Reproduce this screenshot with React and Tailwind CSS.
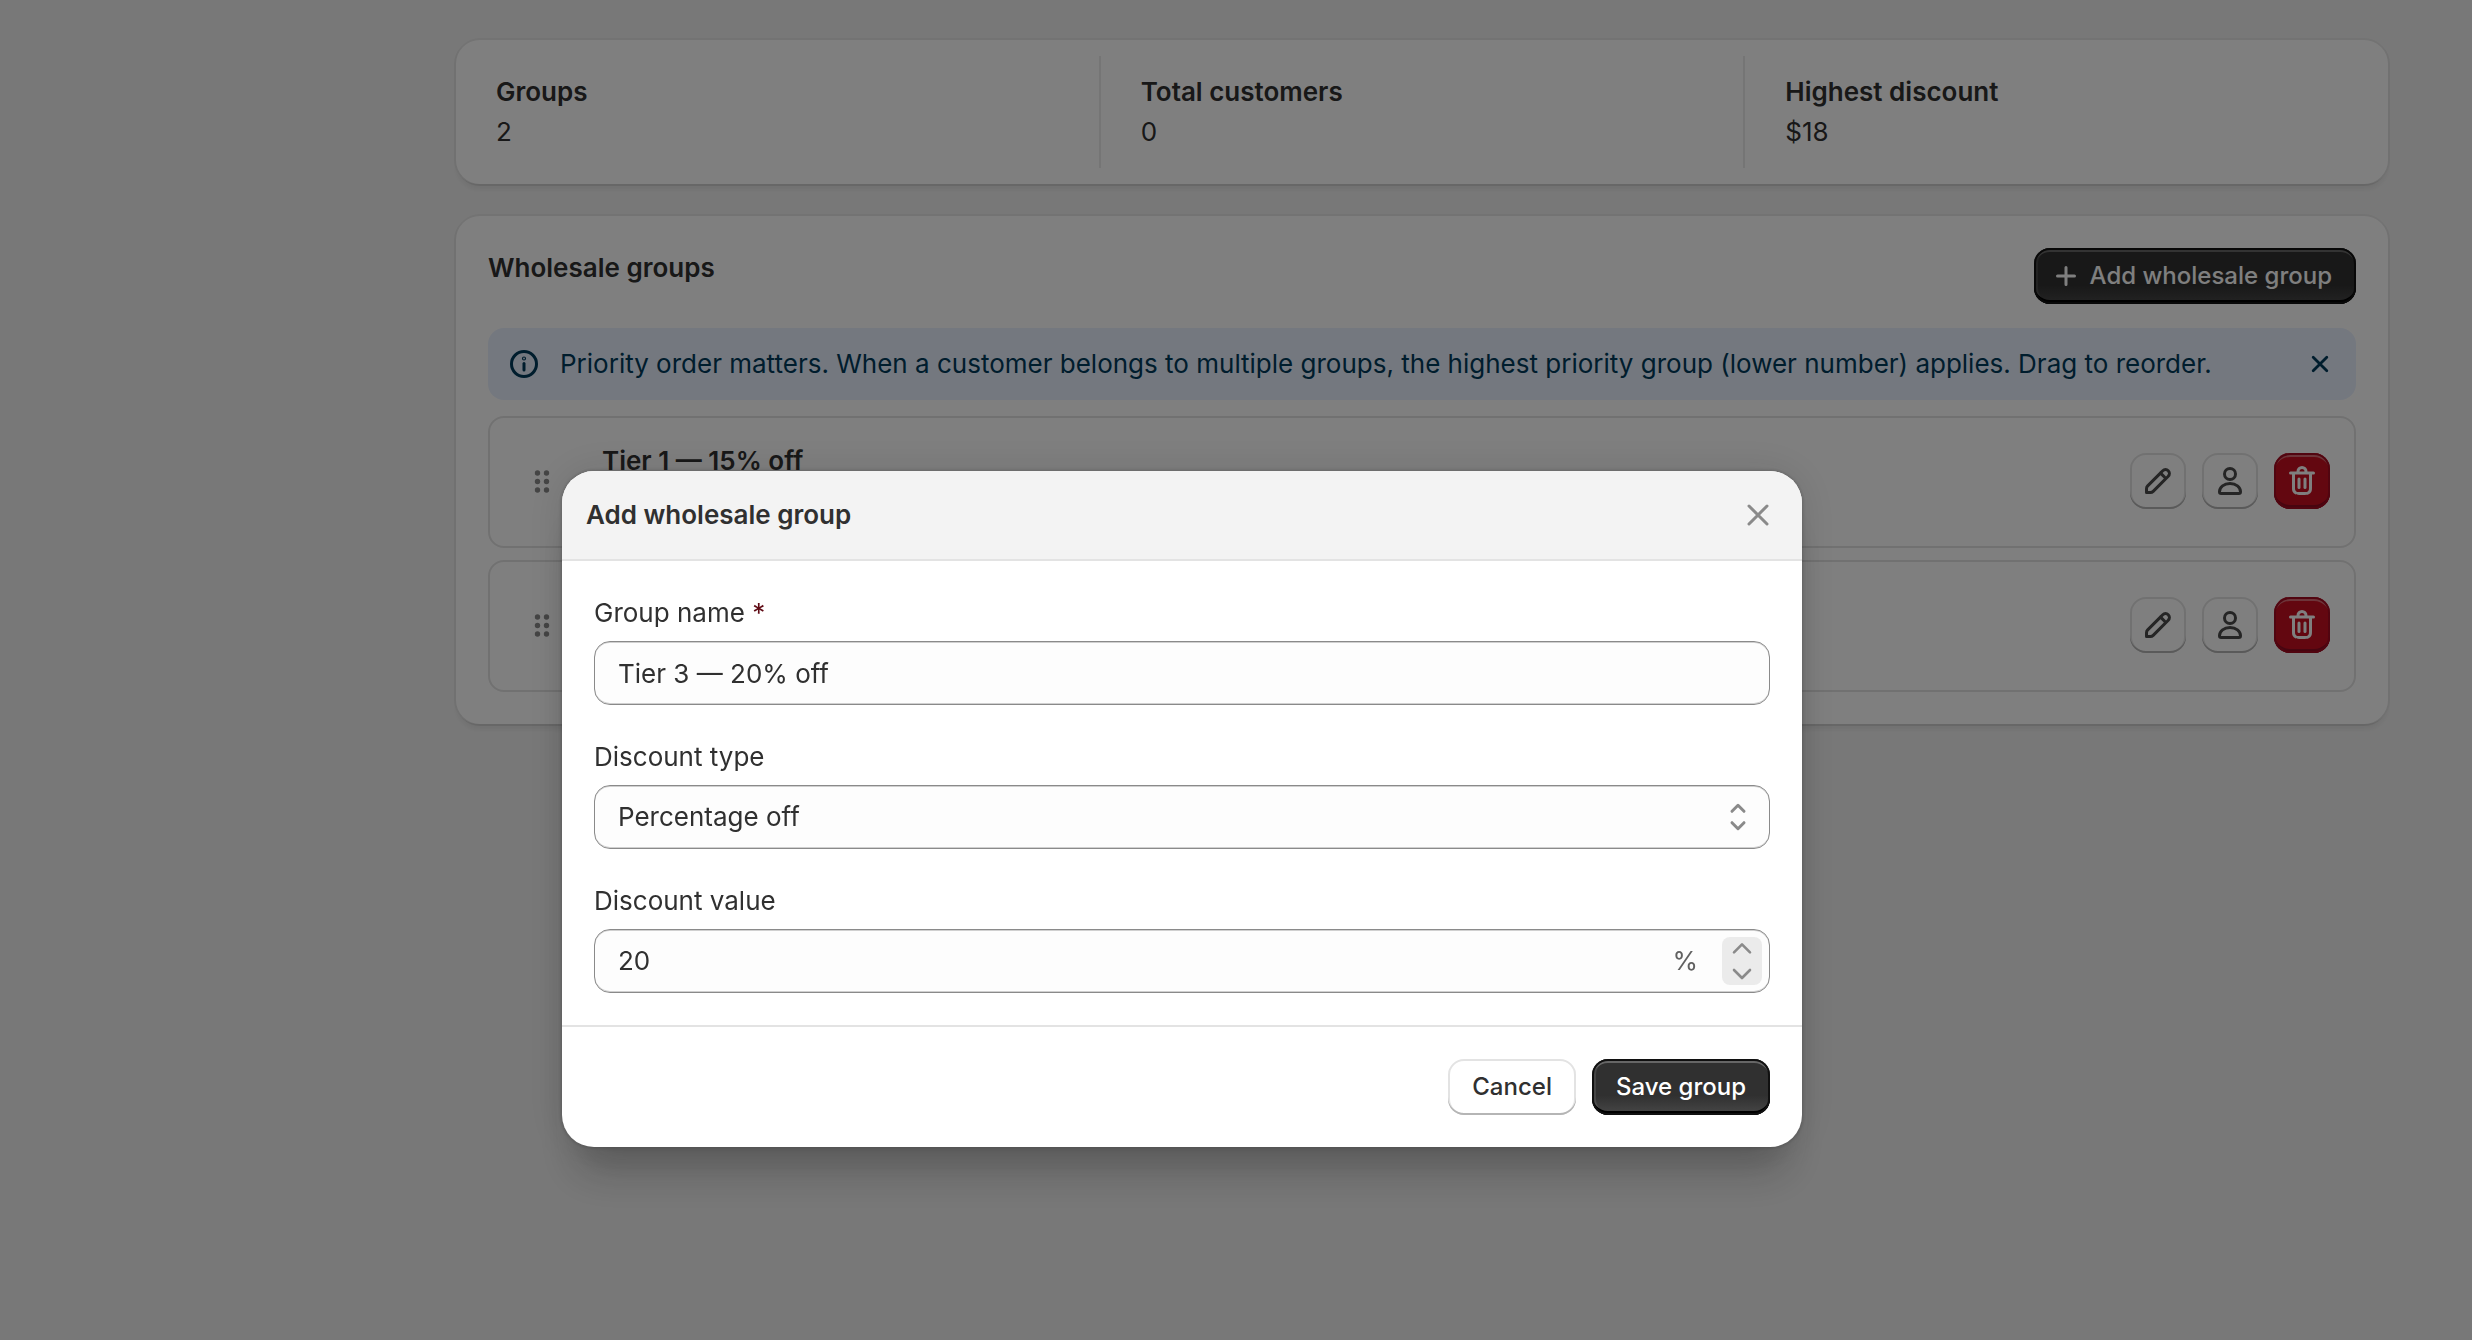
import { useState } from "react";

const ICON_BUTTON =
  "flex size-14 items-center justify-center rounded-2xl bg-white text-[#4a4a4a] shadow-[inset_0_-2px_0_#b5b5b5,inset_0_0_0_2px_#e3e3e3]";
const DARK_BUTTON =
  "flex h-14 items-center rounded-2xl bg-linear-to-b from-[#303030] from-65% to-[#484848] text-2xl leading-8 font-medium text-white shadow-[inset_0_0_0_2px_#101010,inset_0_-4px_0_#000,inset_0_4px_0_#666,inset_2px_0_0_2px_rgba(255,255,255,0.1)]";
const LABEL = "text-[26px] leading-10";
const FIELD =
  "h-16 w-full rounded-2xl border border-[#8a8a8a] bg-[#fdfdfd] px-[23px] text-[26px] leading-10 text-[#303030] shadow-[inset_0_1px_0_#d0d0d0,inset_0_-1px_0_#d0d0d0] outline-none";
const CARD =
  "rounded-3xl bg-white shadow-[0_-2px_0_#e6e6e6,-2px_0_0_#e2e2e2,2px_0_0_#e2e2e2,0_2px_0_#cfcfcf,0_6px_4px_rgba(26,26,26,0.06)]";

function EditIcon() {
  return (
    <svg viewBox="0 0 20 20" className="size-10 fill-current" aria-hidden="true">
      <path
        fillRule="evenodd"
        d="M15.655 4.344a2.695 2.695 0 0 0-3.81 0l-.599.599-.009-.009-1.06 1.06.008.01-5.88 5.88a2.75 2.75 0 0 0-.805 1.944v1.922a.75.75 0 0 0 .75.75h1.922a2.75 2.75 0 0 0 1.944-.806l7.54-7.539a2.695 2.695 0 0 0 0-3.81Zm-4.409 2.72-5.88 5.88a1.25 1.25 0 0 0-.366.884v1.172h1.172c.331 0 .65-.132.883-.366l5.88-5.88-1.689-1.69Zm2.75.629.599-.599a1.195 1.195 0 1 0-1.69-1.689l-.598.599 1.69 1.689Z"
      />
    </svg>
  );
}

function PersonIcon() {
  return (
    <svg viewBox="0 0 20 20" className="size-10 fill-none stroke-current" strokeWidth="1.5" strokeLinejoin="round" aria-hidden="true">
      <circle cx="10" cy="6.5" r="2.75" />
      <path d="M4.75 15.4c0-2.4 2.3-4.15 5.25-4.15s5.25 1.75 5.25 4.15c0 .47-.38.85-.85.85H5.6a.85.85 0 0 1-.85-.85Z" />
    </svg>
  );
}

function TrashIcon() {
  return (
    <svg viewBox="0 0 20 20" className="size-10 fill-current" aria-hidden="true">
      <path d="M11.5 8.25a.75.75 0 0 1 .75.75v4.25a.75.75 0 0 1-1.5 0V9a.75.75 0 0 1 .75-.75Z" />
      <path d="M9.25 9a.75.75 0 0 0-1.5 0v4.25a.75.75 0 0 0 1.5 0V9Z" />
      <path
        fillRule="evenodd"
        d="M7.25 5.25a2.75 2.75 0 0 1 5.5 0h3a.75.75 0 0 1 0 1.5h-.75v5.45c0 1.68 0 2.52-.327 3.162a3 3 0 0 1-1.311 1.311c-.642.327-1.482.327-3.162.327h-.4c-1.68 0-2.52 0-3.162-.327a3 3 0 0 1-1.311-1.311C5 14.72 5 13.88 5 12.2V6.75h-.75a.75.75 0 0 1 0-1.5h3Zm1.5 0a1.25 1.25 0 1 1 2.5 0h-2.5Zm-2.25 1.5h7v5.45c0 .865-.001 1.423-.036 1.848-.033.408-.09.559-.128.633a1.5 1.5 0 0 1-.655.655c-.074.038-.225.095-.633.128-.425.035-.983.036-1.848.036h-.4c-.865 0-1.423-.001-1.848-.036-.408-.033-.559-.09-.633-.128a1.5 1.5 0 0 1-.656-.655c-.037-.074-.094-.225-.127-.633C6.501 13.623 6.5 13.065 6.5 12.2V6.75Z"
      />
    </svg>
  );
}

function DragIcon() {
  return (
    <svg viewBox="0 0 40 40" className="size-10 fill-current" aria-hidden="true">
      {[12, 20.5, 29].map((y) => (
        <g key={y}>
          <circle cx="15.5" cy={y} r="2.7" />
          <circle cx="24.5" cy={y} r="2.7" />
        </g>
      ))}
    </svg>
  );
}

function Stat({ title, value }) {
  return (
    <div className="flex-1 py-4 pl-10">
      <h3 className="text-[26px] leading-10 font-semibold">{title}</h3>
      <p className="text-[26px] leading-10">{value}</p>
    </div>
  );
}

function GroupRow({ name }) {
  return (
    <li className="flex items-center rounded-2xl border-2 border-[#e3e3e3] px-6 pt-[23px] pb-[25px]">
      <button type="button" aria-label="Reorder" className="flex size-14 items-center justify-center text-[#8a8a8a]">
        <DragIcon />
      </button>
      <div className="ml-8 h-20 flex-1">{name && <h3 className="text-[26px] leading-10 font-semibold">{name}</h3>}</div>
      <div className="flex gap-4">
        <button type="button" aria-label="Edit" className={ICON_BUTTON}>
          <EditIcon />
        </button>
        <button type="button" aria-label="Customers" className={ICON_BUTTON}>
          <PersonIcon />
        </button>
        <button
          type="button"
          aria-label="Delete"
          className="flex size-14 items-center justify-center rounded-2xl bg-[#c70f20] text-white shadow-[inset_0_0_0_2px_#a30a20,inset_0_-4px_0_#8e0b21,inset_0_4px_0_#da6b74]"
        >
          <TrashIcon />
        </button>
      </div>
    </li>
  );
}

export default function App() {
  const [name, setName] = useState("Tier 3 — 20% off");
  const [type, setType] = useState("percentage");
  const [value, setValue] = useState("20");

  return (
    <div className="min-h-screen bg-[#f1f1f1] font-['Inter',sans-serif] text-[#303030]">
      <main className="flex flex-col gap-8 pt-10 pr-[84px] pl-[456px]">
        <section className={`${CARD} flex py-4`}>
          <Stat title="Groups" value="2" />
          <div className="w-0.5 bg-[#ebebeb]" />
          <Stat title="Total customers" value="0" />
          <div className="w-0.5 bg-[#ebebeb]" />
          <Stat title="Highest discount" value="$18" />
        </section>

        <section className={`${CARD} p-8`}>
          <div className="flex items-start justify-between">
            <h2 className="text-[26px] leading-10 font-semibold">Wholesale groups</h2>
            <button type="button" className={`${DARK_BUTTON} gap-1 pr-6 pl-3`}>
              <svg viewBox="0 0 40 40" className="size-10 fill-none stroke-current" strokeWidth="3" strokeLinecap="round" aria-hidden="true">
                <path d="M20 11.5v17M11.5 20h17" />
              </svg>
              Add wholesale group
            </button>
          </div>

          <div className="mt-6 flex items-center rounded-2xl bg-[#e9f1ff] p-4 text-[#003a5a]">
            <svg viewBox="0 0 40 40" className="size-10 fill-none stroke-current" strokeWidth="3" strokeLinecap="round" aria-hidden="true">
              <circle cx="20" cy="20" r="12.5" />
              <path d="M20 19.5v6.5" />
              <circle cx="20" cy="14.5" r="0.6" />
            </svg>
            <p className="ml-4 flex-1 text-[26px] leading-10">
              Priority order matters. When a customer belongs to multiple groups, the highest priority group (lower number)
              applies. Drag to reorder.
            </p>
            <button type="button" aria-label="Dismiss">
              <svg viewBox="0 0 40 40" className="size-10 fill-none stroke-current" strokeWidth="2.8" strokeLinecap="round" aria-hidden="true">
                <path d="M13.2 13.2l13.6 13.6M26.8 13.2L13.2 26.8" />
              </svg>
            </button>
          </div>

          <ul className="mt-4 flex flex-col gap-3">
            <GroupRow name="Tier 1 — 15% off" />
            <GroupRow />
          </ul>
        </section>
      </main>

      <div className="fixed inset-0 flex items-start justify-center bg-black/50 pt-[471px] pr-[108px]">
        <div
          role="dialog"
          aria-modal="true"
          aria-labelledby="dialog-title"
          className="w-full max-w-[1240px] rounded-[32px] bg-white shadow-[0_40px_40px_-16px_rgba(26,26,26,0.28),0_0_40px_rgba(26,26,26,0.12),0_0_4px_rgba(26,26,26,0.3)]"
        >
          <header className="flex items-center justify-between rounded-t-[32px] border-b-2 border-[#e3e3e3] bg-[#f3f3f3] p-6">
            <h2 id="dialog-title" className="text-[26px] leading-10 font-semibold">
              Add wholesale group
            </h2>
            <button type="button" aria-label="Close" className="text-[#8a8a8a]">
              <svg viewBox="0 0 40 40" className="size-10 fill-none stroke-current" strokeWidth="3" strokeLinecap="round" aria-hidden="true">
                <path d="M11 11l18 18M29 11L11 29" />
              </svg>
            </button>
          </header>

          <form>
            <div className="flex flex-col gap-8 p-8">
              <div className="flex flex-col gap-2">
                <label htmlFor="group-name" className={LABEL}>
                  Group name <span className="text-[#5f0a14]">*</span>
                </label>
                <input id="group-name" type="text" required value={name} onChange={(e) => setName(e.target.value)} className={FIELD} />
              </div>

              <div className="flex flex-col gap-2">
                <label htmlFor="discount-type" className={LABEL}>
                  Discount type
                </label>
                <div className="relative">
                  <select id="discount-type" value={type} onChange={(e) => setType(e.target.value)} className={`${FIELD} appearance-none`}>
                    <option value="percentage">Percentage off</option>
                    <option value="fixed">Fixed amount off</option>
                  </select>
                  <svg
                    viewBox="0 0 40 40"
                    className="pointer-events-none absolute top-3 right-3 size-10 fill-none stroke-[#8a8a8a]"
                    strokeWidth="3"
                    strokeLinecap="round"
                    strokeLinejoin="round"
                    aria-hidden="true"
                  >
                    <path d="M14 14.3l6-6 6 6M14 25.7l6 6 6-6" />
                  </svg>
                </div>
              </div>

              <div className="flex flex-col gap-2">
                <label htmlFor="discount-value" className={LABEL}>
                  Discount value
                </label>
                <div className={`${FIELD} flex items-center pr-[7px]`}>
                  <input
                    id="discount-value"
                    type="text"
                    inputMode="numeric"
                    value={value}
                    onChange={(e) => setValue(e.target.value)}
                    className="min-w-0 flex-1 bg-transparent outline-none"
                  />
                  <span className="mr-6 text-[#616161]">%</span>
                  <div className="flex h-12 w-10 flex-col overflow-hidden rounded-lg bg-[#ebebeb] text-[#8a8a8a]">
                    <button type="button" aria-label="Increase" onClick={() => setValue(String(Number(value) + 1))}>
                      <svg viewBox="0 0 40 24" className="h-6 w-10 fill-none stroke-current" strokeWidth="2.6" strokeLinecap="round" strokeLinejoin="round" aria-hidden="true">
                        <path d="M12 15.3l8-8 8 8" />
                      </svg>
                    </button>
                    <button type="button" aria-label="Decrease" onClick={() => setValue(String(Number(value) - 1))}>
                      <svg viewBox="0 0 40 24" className="h-6 w-10 fill-none stroke-current" strokeWidth="2.6" strokeLinecap="round" strokeLinejoin="round" aria-hidden="true">
                        <path d="M12 9l8 8 8-8" />
                      </svg>
                    </button>
                  </div>
                </div>
              </div>
            </div>

            <footer className="flex justify-end gap-4 border-t-2 border-[#e3e3e3] p-8">
              <button
                type="button"
                className="h-14 rounded-2xl bg-white px-6 text-2xl leading-8 font-medium shadow-[inset_0_-2px_0_#b5b5b5,inset_0_0_0_2px_#e3e3e3]"
              >
                Cancel
              </button>
              <button type="button" className={`${DARK_BUTTON} px-6`}>
                Save group
              </button>
            </footer>
          </form>
        </div>
      </div>
    </div>
  );
}
